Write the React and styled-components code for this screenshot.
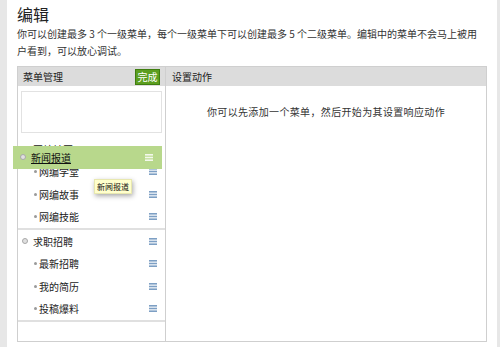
import React from "react";
import styled, { createGlobalStyle } from "styled-components";

const Global = createGlobalStyle`
  html, body { margin: 0; padding: 0; }
  body {
    background: #e7e7e7;
    font-family: "Noto Sans CJK SC", "Noto Sans", sans-serif;
    color: #333;
  }
`;

const Card = styled.div`
  margin: 0 3px 0 7px;
  background: #fff;
  min-height: 347px;
  padding: 4px 10px 0 10px;
  box-sizing: border-box;
`;

const Title = styled.h2`
  margin: 0;
  font-size: 16px;
  line-height: 20px;
  font-weight: normal;
  color: #222;
`;

const Desc = styled.p`
  margin: 0.5px 0 0 0;
  font-size: 10px;
  line-height: 17px;
  color: #333;
  width: 464px;
`;

const Panel = styled.div`
  margin-top: 7px;
  border: 1px solid #cfcfcf;
  height: 274px;
  display: flex;
`;

const LeftCol = styled.div`
  position: relative;
  width: 147px;
  border-right: 1px solid #cfcfcf;
  display: flex;
  flex-direction: column;
`;

const RightCol = styled.div`
  flex: 1;
  display: flex;
  flex-direction: column;
`;

const Header = styled.div`
  height: 19px;
  background: #dcdcdc;
  display: flex;
  align-items: center;
  justify-content: space-between;
  padding: 0 5px 0 ${(p) => p.$pl || 5}px;
  font-size: 10px;
  color: #222;
`;

const DoneButton = styled.button`
  height: 16px;
  width: 25px;
  margin-top: 2px;
  padding: 0;
  border: 1px solid #3f7d10;
  background: #5c9e1e;
  color: #fff;
  font-family: inherit;
  font-size: 10px;
  line-height: 14px;
`;

const EmptyBox = styled.div`
  margin: 5px 3px 0 3px;
  height: 40px;
  border: 1px solid #e2e2e2;
`;

const List = styled.div`
  margin-top: 5.5px;
`;

const Group = styled.div`
  border-bottom: 2px solid #e0e0e0;
`;

const Row = styled.div`
  height: 22.5px;
  display: flex;
  align-items: center;
  padding: 0 8px 0 ${(p) => (p.$sub ? 16 : 4)}px;
  font-size: 10px;
  color: #222;
`;

const Ring = styled.span`
  width: 4px;
  height: 4px;
  border-radius: 50%;
  border: 1px solid #a8a8a8;
  background: #e0e0e0;
  margin-right: 5px;
  flex: none;
`;

const Dot = styled.span`
  width: 3px;
  height: 3px;
  border-radius: 50%;
  background: #9a9a9a;
  margin-right: 2px;
  flex: none;
`;

const Label = styled.span`
  flex: 1;
  text-decoration: ${(p) => (p.$underline ? "underline" : "none")};
`;

const Dragged = styled.div`
  position: absolute;
  left: -5px;
  top: 79px;
  width: 149px;
  height: 23px;
  background: #b8d88c;
  display: flex;
  align-items: center;
  padding: 0 9px 0 7px;
  box-sizing: border-box;
  font-size: 10px;
  color: #111;
`;

const Tooltip = styled.div`
  position: absolute;
  left: 76px;
  top: 112px;
  height: 13px;
  padding: 0 2px;
  background: #ffffcc;
  border: 1px solid #e8e8b0;
  font-size: 8px;
  line-height: 13px;
  color: #111;
  box-shadow: 1px 2px 5px rgba(0, 0, 0, 0.35);
`;

const Message = styled.div`
  padding-top: 19px;
  text-align: center;
  font-size: 10px;
  line-height: 14px;
  color: #333;
  letter-spacing: 0.35px;
`;

const Burger = ({ color = "#7d9fc4" }) => (
  <svg width="8" height="7" viewBox="0 0 8 7" style={{ flex: "none" }}>
    <rect x="0" y="0" width="8" height="1.6" fill={color} />
    <rect x="0" y="2.7" width="8" height="1.6" fill={color} />
    <rect x="0" y="5.4" width="8" height="1.6" fill={color} />
  </svg>
);

const groups = [
  { name: "网编社区", subs: ["网编学堂", "网编故事", "网编技能"] },
  { name: "求职招聘", subs: ["最新招聘", "我的简历", "投稿爆料"] },
];

export default function App() {
  return (
    <>
      <Global />
      <Card>
        <Title>编辑</Title>
        <Desc>
          你可以创建最多 3 个一级菜单，每个一级菜单下可以创建最多 5 个二级菜单。编辑中的菜单不会马上被用户看到，可以放心调试。
        </Desc>
        <Panel>
          <LeftCol>
            <Header>
              <span>菜单管理</span>
              <DoneButton>完成</DoneButton>
            </Header>
            <EmptyBox />
            <List>
              {groups.map((g) => (
                <Group key={g.name}>
                  <Row>
                    <Ring />
                    <Label>{g.name}</Label>
                    <Burger />
                  </Row>
                  {g.subs.map((s) => (
                    <Row $sub key={s}>
                      <Dot />
                      <Label>{s}</Label>
                      <Burger />
                    </Row>
                  ))}
                </Group>
              ))}
            </List>
            <Dragged>
              <Ring />
              <Label $underline>新闻报道</Label>
              <Burger color="#f3f8ec" />
            </Dragged>
            <Tooltip>新闻报道</Tooltip>
          </LeftCol>
          <RightCol>
            <Header $pl={6}>
              <span>设置动作</span>
            </Header>
            <Message>你可以先添加一个菜单，然后开始为其设置响应动作</Message>
          </RightCol>
        </Panel>
      </Card>
    </>
  );
}
